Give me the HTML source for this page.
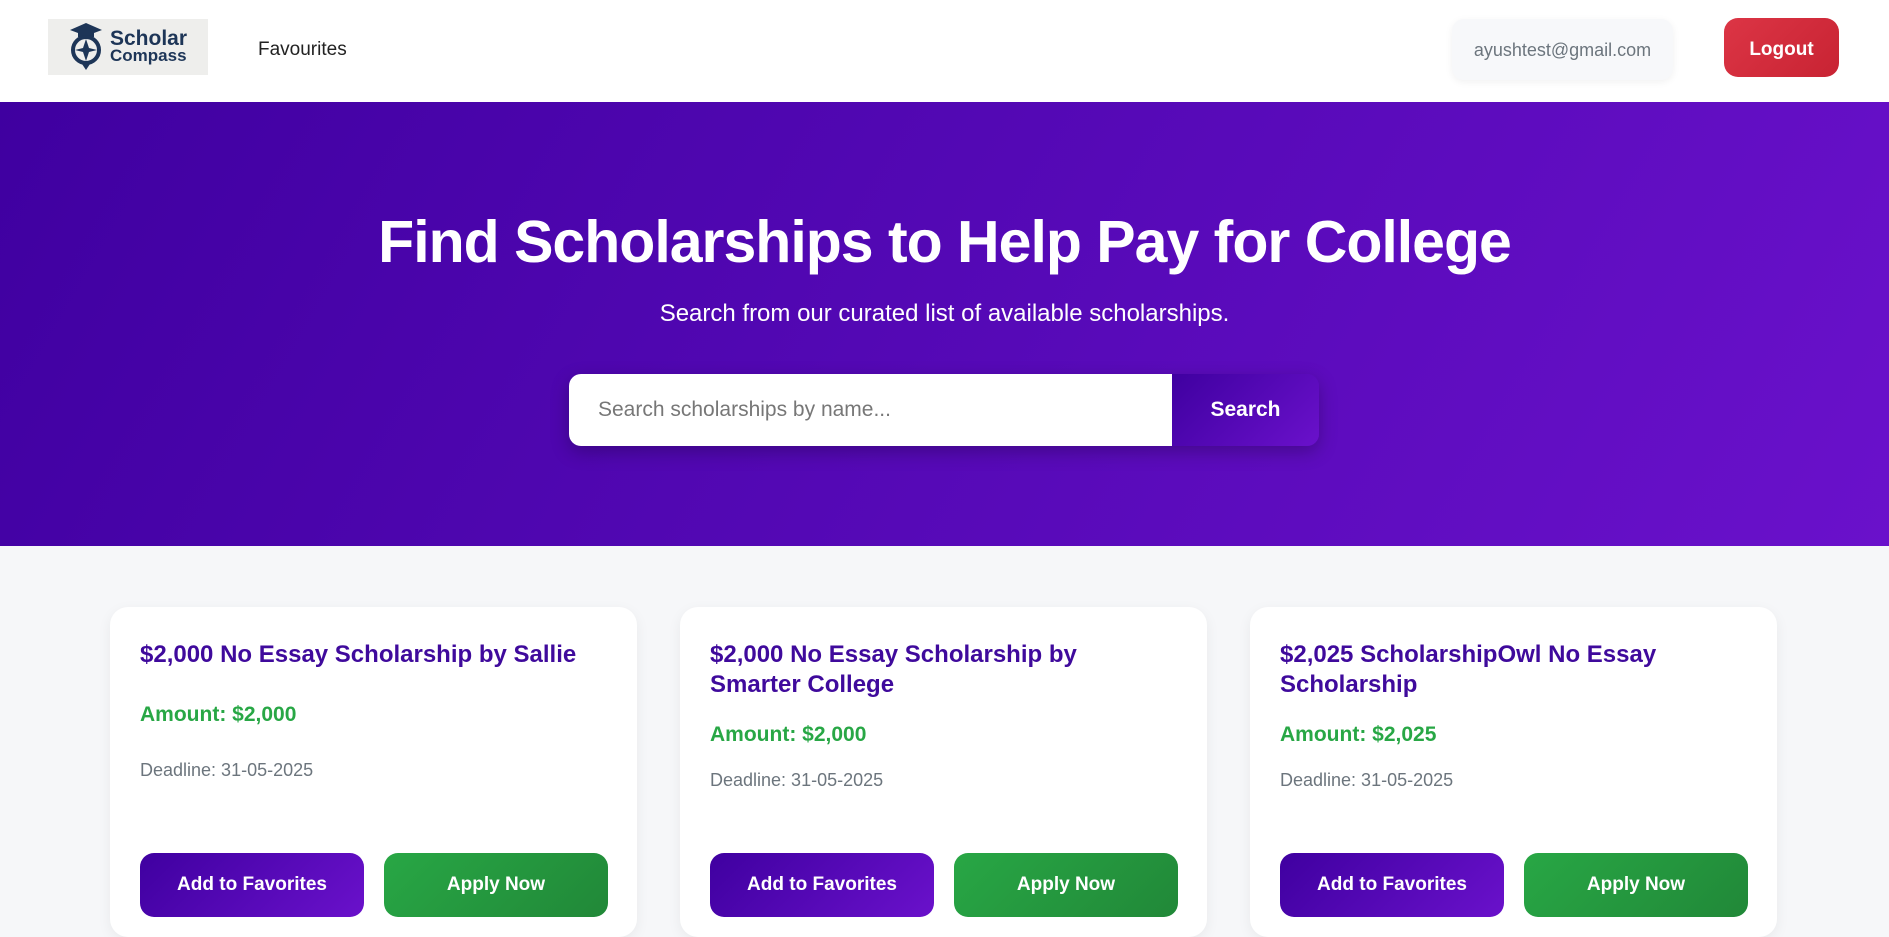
<!DOCTYPE html>
<html><head><meta charset="utf-8"><style>
*{box-sizing:border-box;margin:0;padding:0}
body{width:1889px;height:911px;overflow:hidden;font-family:"Liberation Sans",sans-serif;background:#f6f7f9;position:relative}
.nav{position:absolute;left:0;top:0;width:1889px;height:102px;background:#fff}
.logo{position:absolute;left:48px;top:19px;width:160px;height:56px;background:#eeeeec;display:flex;align-items:center}
.logo .t{font-weight:bold;color:#1d3557;line-height:17px;margin-left:8px}
.logo .t .a{font-size:21px;display:block}
.logo .t .b{font-size:17px;display:block}
.fav{position:absolute;left:258px;top:39px;font-size:19px;color:#222}
.email{position:absolute;left:1452px;top:19px;width:221px;height:61px;background:#f7f8fa;border-radius:12px;box-shadow:0 2px 8px rgba(0,0,0,.06);font-size:18px;color:#6c757d;display:flex;align-items:center;justify-content:center;padding-top:2px}
.logout{position:absolute;left:1724px;top:18px;width:115px;height:59px;background:linear-gradient(135deg,#dc3545,#c82333);border-radius:14px;color:#fff;font-weight:bold;font-size:19px;display:flex;align-items:center;justify-content:center;padding-top:5px}
.hero{position:absolute;left:0;top:102px;width:1889px;height:444px;background:linear-gradient(120deg,#3f00a0,#6a11cb);color:#fff;text-align:center}
.hero h1{position:absolute;left:0;right:0;top:106px;font-size:59px;font-weight:bold;letter-spacing:-1px}
.hero p{position:absolute;left:0;right:0;top:198px;font-size:24px}
.search{position:absolute;left:569px;top:272px;width:750px;height:72px;border-radius:12px;box-shadow:0 6px 18px rgba(0,0,0,.25);overflow:hidden;display:flex}
.search .in{flex:0 0 603px;background:#fff;color:#777;font-size:21px;display:flex;align-items:center;padding-left:29px;text-align:left}
.search .bt{flex:1;background:linear-gradient(135deg,#3f00a0,#6a11cb);font-weight:bold;font-size:21px;display:flex;align-items:center;justify-content:center}
.card{position:absolute;top:607px;width:527px;height:330px;background:#fff;border-radius:18px;box-shadow:0 4px 14px rgba(0,0,0,.06);padding:0 30px}
.card h3{position:absolute;left:30px;width:450px;top:33px;font-size:24px;color:#3f0a9c;line-height:30px}
.amt{position:absolute;left:30px;font-size:21px;font-weight:bold;color:#28a745}
.dl{position:absolute;left:30px;font-size:18px;color:#6c757d}
.b1,.b2{position:absolute;top:246px;width:224px;height:64px;border-radius:14px;color:#fff;font-weight:bold;font-size:19px;display:flex;align-items:center;justify-content:center}
.b1{left:30px;background:linear-gradient(135deg,#3f00a0,#6a11cb)}
.b2{left:274px;background:linear-gradient(135deg,#28a745,#218838)}
</style></head><body>
<div class="nav">
<div class="logo">
<svg width="44" height="54" viewBox="0 0 44 54" style="margin-left:16px"><path d="M6 10 L22 3 L38 10 L22 16Z" fill="#1d3557"/><rect x="14" y="11" width="16" height="6" fill="#1d3557"/><circle cx="22" cy="30" r="13" fill="none" stroke="#1d3557" stroke-width="4"/><path d="M22 19 L25 28 L33 30 L25 32 L22 41 L19 32 L11 30 L19 28Z" fill="#1d3557"/><path d="M18 44 L22 50 L26 44Z" fill="#1d3557"/></svg>
<div class="t" style="margin-left:2px"><span class="a">Scholar</span><span class="b">Compass</span></div>
</div>
<div class="fav">Favourites</div>
<div class="email">ayushtest@gmail.com</div>
<div class="logout">Logout</div>
</div>
<div class="hero">
<h1>Find Scholarships to Help Pay for College</h1>
<p>Search from our curated list of available scholarships.</p>
<div class="search"><div class="in">Search scholarships by name...</div><div class="bt">Search</div></div>
</div>
<div class="card" style="left:110px"><h3>$2,000 No Essay Scholarship by Sallie</h3><div class="amt" style="top:96px">Amount: $2,000</div><div class="dl" style="top:153px">Deadline: 31-05-2025</div><div class="b1">Add to Favorites</div><div class="b2">Apply Now</div></div>
<div class="card" style="left:680px"><h3>$2,000 No Essay Scholarship by Smarter College</h3><div class="amt" style="top:116px">Amount: $2,000</div><div class="dl" style="top:163px">Deadline: 31-05-2025</div><div class="b1">Add to Favorites</div><div class="b2">Apply Now</div></div>
<div class="card" style="left:1250px"><h3>$2,025 ScholarshipOwl No Essay Scholarship</h3><div class="amt" style="top:116px">Amount: $2,025</div><div class="dl" style="top:163px">Deadline: 31-05-2025</div><div class="b1">Add to Favorites</div><div class="b2">Apply Now</div></div>
</body></html>
